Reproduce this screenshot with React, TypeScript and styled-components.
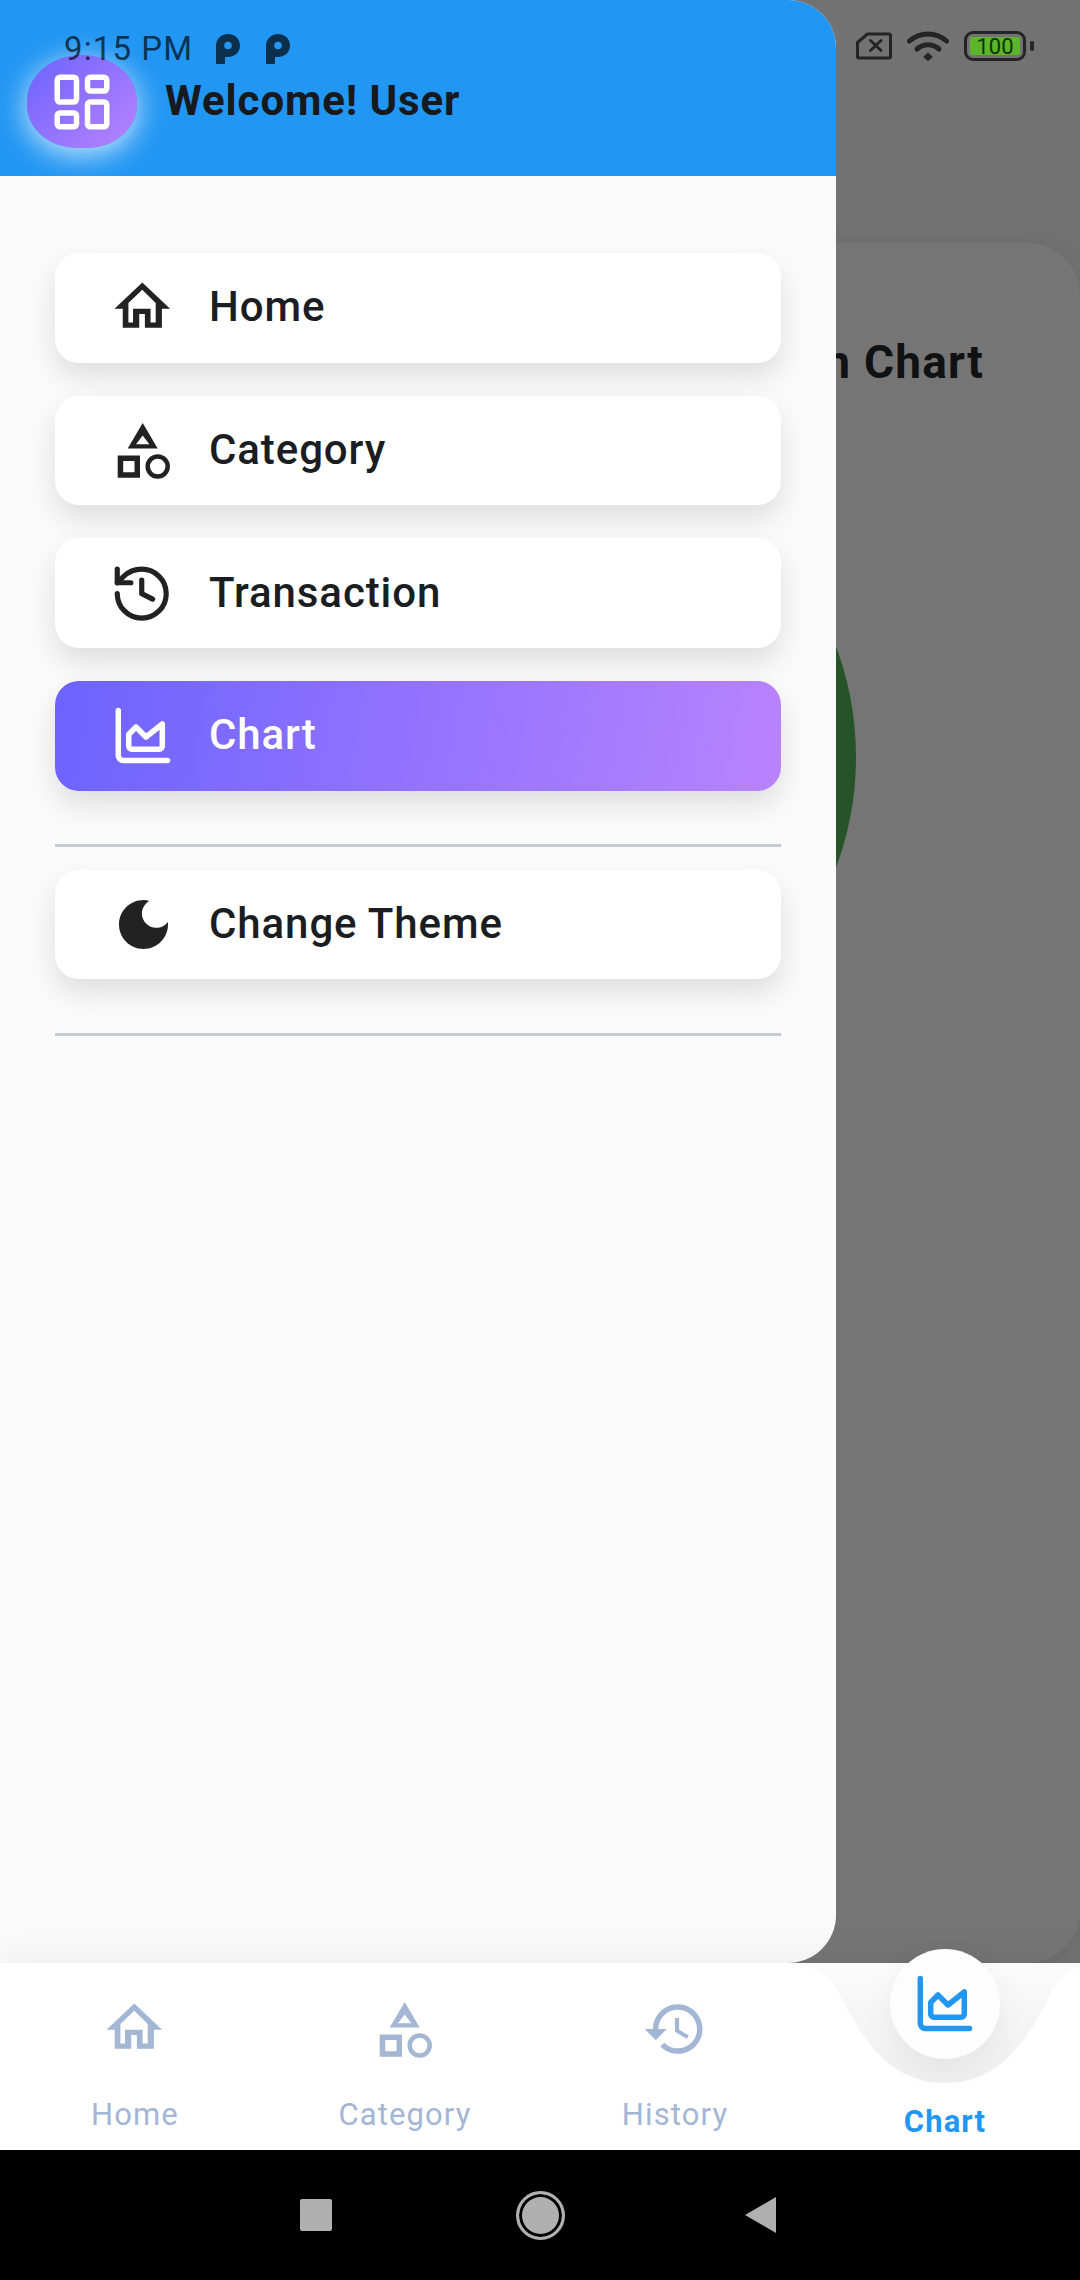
import React from 'react';
import styled, { createGlobalStyle } from 'styled-components';
import { LayoutDashboard } from 'lucide-react';

const GlobalStyle = createGlobalStyle`
  html, body {
    margin: 0;
    padding: 0;
    background: #000;
    font-family: Roboto, "Noto Sans", sans-serif;
  }
`

// all drawn on a 74 box, dy nudges the drawing inside its slot
type IconProps = { dy: number }

const HomeIcon = ({ dy }: IconProps) => (
    <svg width="74" height="74" viewBox={`0 ${dy} 74 74`} fill="currentColor">
        <path
            transform="translate(8.5 7.5) scale(1.03 1.05)"
            fillRule="evenodd"
            d="M27 0 54 25H46V43H29.5V30H24V43H8V25H0ZM27 7 13.5 19.5V38H18V25H35V38H40V19.5Z"
        />
    </svg>
)

const CategoryIcon = ({ dy }: IconProps) => (
    <svg width="74" height="74" viewBox={`0 ${dy} 74 74`} fill="currentColor">
        <path fillRule="evenodd" d="M36.7 8 51.7 33.5H21.7ZM36.7 20.5 30 29.3H43.4Z" />
        <path fillRule="evenodd" d="M11.7 40.5H34V62.7H11.7ZM17.2 46V57.2H28.5V46Z" />
        <circle cx="51.7" cy="51.5" r="10" fill="none" stroke="currentColor" strokeWidth="4.5" />
    </svg>
)

const ClockBackIcon = ({ dy }: IconProps) => (
    <svg width="74" height="74" viewBox={`0 ${dy} 74 74`} fill="none" stroke="currentColor" strokeLinecap="round" strokeLinejoin="round">
        <g transform="translate(3.1 6) scale(2.72)" strokeWidth="1.9">
            <path d="M3 12a9 9 0 1 0 9-9 9.75 9.75 0 0 0-6.74 2.74L3 8" />
            <path d="M3 3v5h5" />
            <path d="M12 7v5l4 2" />
        </g>
    </svg>
)

const ChartIcon = ({ dy }: IconProps) => (
    <svg width="74" height="74" viewBox={`0 ${dy} 74 74`} fill="none" stroke="currentColor" strokeWidth="5.5" strokeLinecap="round" strokeLinejoin="round">
        <path d="M12.3 10.5V55.5a5 5 0 0 0 5 5H61.5" />
        <path d="M22.7 34.500 30 27 40 37 56.300 24V46a3.200 3.200 0 0 1-3.200 3.200H25.900a3.200 3.200 0 0 1-3.200-3.200Z" />
    </svg>
)

const NavHistoryIcon = () => (
    <svg width="74" height="74" viewBox="-1.45 -0.75 26.9 26.9" fill="currentColor">
        <path d="M13 3c-4.97 0-9 4.03-9 9H1l3.89 3.89.07.14L9 12H6c0-3.87 3.13-7 7-7s7 3.13 7 7-3.13 7-7 7c-1.93 0-3.68-.79-4.94-2.06l-1.42 1.42C8.27 19.99 10.51 21 13 21c4.97 0 9-4.03 9-9s-4.03-9-9-9zm-1 5v5l4.28 2.54.72-1.21-3.5-2.08V8H12z" />
    </svg>
)

const MoonIcon = () => (
    <svg width="74" height="74" viewBox="0 0 74 74" fill="currentColor">
        <path d="M37.5 13C24 13 13 24 13 37.5S24 62 37.5 62 62 51 62 37.5c0-.9 0-1.7-.2-2.6-2.6 3.5-6.8 5.9-11.6 5.9-7.9 0-14.3-6.4-14.3-14.3 0-5.4 3-10.1 7.4-12.6-1.9-.6-3.8-.9-5.8-.9Z" />
    </svg>
)

const NoticeIcon = () => (
    <svg width="24" height="30" viewBox="0 0 24 30" fill="currentColor">
        <path fillRule="evenodd" d="M0 12C0 5 5 0 12 0s12 5 12 11.5S19 23 12 23H9v7H0ZM12 7.700a3.800 3.800 0 1 0 0 7.600 3.800 3.800 0 0 0 0-7.600Z" />
    </svg>
)

const SimIcon = () => (
    <svg width="36" height="28" viewBox="0 0 36 28" fill="none" stroke="currentColor" strokeWidth="3" strokeLinecap="round" strokeLinejoin="round">
        <path d="M11.500 2H33a1.500 1.500 0 0 1 1.500 1.500V24.500A1.500 1.500 0 0 1 33 26H3a1.500 1.500 0 0 1-1.500-1.500V10.500Z" />
        <path d="M14.500 8.500 25 18.500M25 8.500 14.500 18.500" />
    </svg>
)

const WifiIcon = () => (
    <svg width="42" height="30" viewBox="0 0 42 30" fill="none" stroke="currentColor" strokeWidth="5" strokeLinecap="round">
        <path d="M2.500 10C13 .6 29 .6 39.500 10" />
        <path d="M10 18c6.500-5.600 15.500-5.600 22 0" />
        <path d="M21 21.500 26 26 21 30 16 26Z" fill="currentColor" strokeWidth="0" />
    </svg>
)

const navItems = [
    { label: 'Home', icon: <HomeIcon dy={-2} /> },
    { label: 'Category', icon: <CategoryIcon dy={0} /> },
    { label: 'History', icon: <NavHistoryIcon /> },
]

export default function App() {
    return (
        <Screen>
            <GlobalStyle />
            <Main>
                <Card>
                    <CardTitle>Transaction Chart</CardTitle>
                    <PieCircle />
                </Card>
                <Drawer>
                    <DrawerHeader>
                        <Avatar>
                            <LayoutDashboard size={66} color="#fff" strokeWidth={2} />
                        </Avatar>
                        <Welcome>Welcome! User</Welcome>
                    </DrawerHeader>
                    <Menu>
                        <MenuItem>
                            <MenuIcon><HomeIcon dy={-4} /></MenuIcon>
                            <MenuText>Home</MenuText>
                        </MenuItem>
                        <MenuItem>
                            <MenuIcon><CategoryIcon dy={-2} /></MenuIcon>
                            <MenuText>Category</MenuText>
                        </MenuItem>
                        <MenuItem>
                            <MenuIcon><ClockBackIcon dy={1} /></MenuIcon>
                            <MenuText>Transaction</MenuText>
                        </MenuItem>
                        <MenuItem $active>
                            <MenuIcon $active><ChartIcon dy={-1} /></MenuIcon>
                            <MenuText>Chart</MenuText>
                        </MenuItem>
                        <Divider />
                        <MenuItem>
                            <MenuIcon><MoonIcon /></MenuIcon>
                            <MenuText>Change Theme</MenuText>
                        </MenuItem>
                        <Divider $last />
                    </Menu>
                </Drawer>
                <StatusBar>
                    <NoticeGroup>
                        <Clock>9:15 PM</Clock>
                        <NoticeIcon />
                        <NoticeIcon />
                    </NoticeGroup>
                    <SystemGroup>
                        <SimIcon />
                        <WifiIcon />
                        <Battery>
                            <BatteryFill>100</BatteryFill>
                        </Battery>
                    </SystemGroup>
                </StatusBar>
            </Main>
            <BottomNav>
                {navItems.map((item) => (
                    <NavTab key={item.label}>
                        <NavIcon>{item.icon}</NavIcon>
                        <NavLabel>{item.label}</NavLabel>
                    </NavTab>
                ))}
                <NavTab>
                    <Notch width="328" height="120" viewBox="0 0 328 120">
                        <defs>
                            <linearGradient id="notchFill" x1="0" y1="0" x2="0" y2="1">
                                <stop offset="0" stopColor="#fbfbfb" />
                                <stop offset="1" stopColor="#efefef" />
                            </linearGradient>
                        </defs>
                        <path
                            fill="url(#notchFill)"
                            d="M0 0C35 0 48 12 58 30 78 70 105 120 164 120 223 120 250 70 270 30 280 12 293 0 328 0Z"
                        />
                    </Notch>
                    <Bubble><ChartIcon dy={-1} /></Bubble>
                    <NavLabel $active>Chart</NavLabel>
                </NavTab>
            </BottomNav>
            <SystemBar>
                <SysSquare />
                <SysCircle />
                <SysBack />
            </SystemBar>
        </Screen>
    );
}

const Screen = styled.div`
  width: 1080px;
  height: 2280px;
  display: flex;
  flex-direction: column;
  overflow: hidden;
`
const Main = styled.div`
  position: relative;
  flex: 1;
  display: flex;
  flex-direction: column;
  padding-top: 243px;
  box-sizing: border-box;
  background: #727272;
`
const Card = styled.div`
  flex: 1;
  display: flex;
  flex-direction: column;
  align-items: center;
  background: #757575;
  border-radius: 52px;
  box-shadow: 0 0 18px rgba(0, 0, 0, 0.08);
`
const CardTitle = styled.div`
  align-self: flex-end;
  margin: 93px 96px 0 0;
  font-size: 46px;
  line-height: 52px;
  font-weight: 700;
  letter-spacing: 1.2px;
  color: #0f1113;
`
const PieCircle = styled.div`
  width: 632px;
  height: 632px;
  margin-top: 53px;
  border-radius: 50%;
  background: #265428;
`
const Drawer = styled.div`
  position: absolute;
  top: 0;
  left: 0;
  bottom: 0;
  width: 836px;
  display: flex;
  flex-direction: column;
  background: #fafafa;
  border-radius: 0 48px 48px 0;
  overflow: hidden;
`
const DrawerHeader = styled.div`
  height: 176px;
  flex-shrink: 0;
  box-sizing: border-box;
  display: flex;
  align-items: flex-start;
  padding: 55px 0 0 27px;
  gap: 28px;
  background: #2196f3;
`
const Avatar = styled.div`
  width: 110px;
  height: 93px;
  display: flex;
  align-items: center;
  justify-content: center;
  border-radius: 50% 50% 46% 46%;
  background: linear-gradient(135deg, #6c63ff, #b983ff);
  box-shadow: 0 6px 30px rgba(255, 255, 255, 0.8);
`
const Welcome = styled.div`
  margin-top: 21px;
  font-size: 42px;
  line-height: 50px;
  font-weight: 700;
  letter-spacing: 0.9px;
  color: #16191d;
`
const Menu = styled.div`
  display: flex;
  flex-direction: column;
  gap: 33px;
  padding: 77px 55px 0;
`
const MenuItem = styled.div<{ $active?: boolean }>`
  height: 109.67px;
  display: flex;
  align-items: center;
  gap: 29px;
  padding-left: 51px;
  border-radius: 24px;
  color: ${(p) => (p.$active ? '#fff' : '#1a1d21')};
  background: ${(p) => (p.$active ? 'linear-gradient(100deg, #6c63ff, #b983ff)' : '#fff')};
  box-shadow: 0 14px 28px rgba(0, 0, 0, 0.11);
`
const MenuIcon = styled.span<{ $active?: boolean }>`
  width: 74px;
  height: 74px;
  display: flex;
  color: ${(p) => (p.$active ? '#fff' : '#222')};
`
const MenuText = styled.span`
  margin-top: -2px;
  font-size: 42px;
  font-weight: 500;
  letter-spacing: 0.9px;
`
const Divider = styled.div<{ $last?: boolean }>`
  height: 3px;
  background: #c5cad3;
  margin: ${(p) => (p.$last ? '21px 0 0' : '20px 0 -10px')};
`
const StatusBar = styled.div`
  position: absolute;
  top: 0;
  left: 0;
  right: 0;
  height: 94px;
  box-sizing: border-box;
  padding: 31px 48px 0 64px;
  display: flex;
  align-items: flex-start;
  justify-content: space-between;
  color: rgba(0, 0, 0, 0.68);
`
const NoticeGroup = styled.div`
  display: flex;
  align-items: center;
  gap: 26px;
`
const SystemGroup = styled.div`
  display: flex;
  align-items: center;
  gap: 15px;
`
const Clock = styled.div`
  font-size: 33px;
  line-height: 36px;
  letter-spacing: 1.1px;
  margin-right: -3px;
`
const Battery = styled.div`
  position: relative;
  width: 62px;
  height: 30px;
  box-sizing: border-box;
  padding: 3px;
  border: 3.5px solid currentColor;
  border-radius: 9px;
  margin-right: 6px;

  &::after {
    content: "";
    position: absolute;
    right: -11px;
    top: 7px;
    width: 4px;
    height: 10px;
    border-radius: 2px;
    background: currentColor;
  }
`
const BatteryFill = styled.div`
  height: 100%;
  display: flex;
  align-items: center;
  justify-content: center;
  border-radius: 2px;
  background: #5cb52b;
  font-size: 22px;
  color: #0f3208;
`
const BottomNav = styled.div`
  position: relative;
  z-index: 2;
  height: 187px;
  flex-shrink: 0;
  display: flex;
  background: #fff;
  box-shadow: 0 -6px 40px rgba(0, 0, 0, 0.05);
`
const NavTab = styled.div`
  position: relative;
  flex: 1;
  display: flex;
  flex-direction: column;
  align-items: center;
  padding-top: 31px;
`
const NavIcon = styled.div`
  width: 74px;
  height: 74px;
  color: #a3b6d3;
`
const NavLabel = styled.div<{ $active?: boolean }>`
  margin-top: ${(p) => (p.$active ? '110px' : '29px')};
  font-size: 31px;
  line-height: 36px;
  letter-spacing: 1.1px;
  font-weight: ${(p) => (p.$active ? 700 : 400)};
  color: ${(p) => (p.$active ? '#2196f3' : '#a3b6d3')};
`
const Notch = styled.svg`
  position: absolute;
  top: 0;
  left: calc(50% - 164px);
`
const Bubble = styled.div`
  position: absolute;
  top: -14px;
  left: calc(50% - 55px);
  width: 110px;
  height: 110px;
  display: flex;
  align-items: center;
  justify-content: center;
  border-radius: 50%;
  background: #fdfdfd;
  color: #2196f3;
  box-shadow: 0 10px 30px rgba(0, 0, 0, 0.06);
`
const SystemBar = styled.div`
  height: 130px;
  flex-shrink: 0;
  display: flex;
  align-items: center;
  justify-content: center;
  gap: 182px;
  background: #000;
`
const SysSquare = styled.div`
  width: 32px;
  height: 32px;
  margin-right: 2px;
  border-radius: 2px;
  background: #b0b0b0;
`
const SysCircle = styled.div`
  width: 49px;
  height: 49px;
  box-sizing: border-box;
  border: 3px solid #b0b0b0;
  border-radius: 50%;
  background: #b0b0b0;
  box-shadow: inset 0 0 0 3px #000;
`
const SysBack = styled.div`
  width: 31px;
  height: 36px;
  margin: 0 4px 0 -2px;
  background: #b0b0b0;
  clip-path: polygon(100% 0, 100% 100%, 0 50%);
`
